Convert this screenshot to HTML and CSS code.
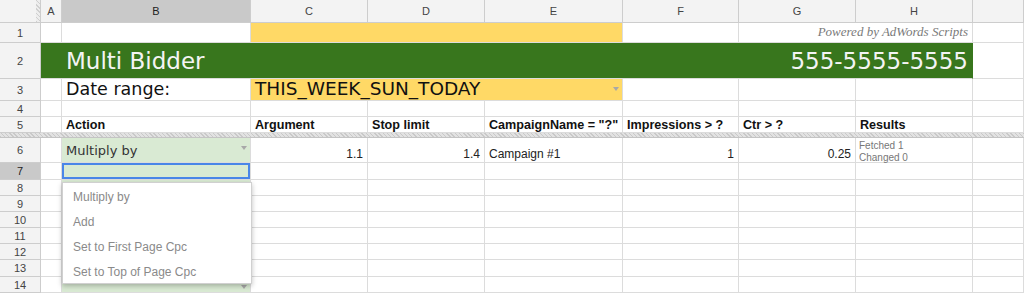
FILE: index.html
```html
<!DOCTYPE html>
<html lang="en">
<head>
    <meta charset="UTF-8">
    <title>Multi Bidder</title>
    <link rel="stylesheet" href="styles.css">
</head>
<body>
    <div class="sheet">
        <!-- column headers -->
        <div class="c ch corner"></div>
        <div class="c ch">A</div>
        <div class="c ch sel">B</div>
        <div class="c ch">C</div>
        <div class="c ch">D</div>
        <div class="c ch">E</div>
        <div class="c ch">F</div>
        <div class="c ch">G</div>
        <div class="c ch">H</div>
        <div class="c ch"></div>

        <!-- row 1 -->
        <div class="c rh">1</div>
        <div class="c"></div>
        <div class="c"></div>
        <div class="c yellow span3"></div>
        <div class="c"></div>
        <div class="c powered span2">Powered by AdWords Scripts</div>
        <div class="c"></div>

        <!-- row 2 -->
        <div class="c rh">2</div>
        <div class="c green span8">
            <span class="title">Multi Bidder</span>
            <span class="phone">555-5555-5555</span>
        </div>
        <div class="c"></div>

        <!-- row 3 -->
        <div class="c rh">3</div>
        <div class="c"></div>
        <div class="c big">Date range:</div>
        <div class="c yellow big range span3">THIS_WEEK_SUN_TODAY<i class="arrow"></i></div>
        <div class="c"></div>
        <div class="c"></div>
        <div class="c"></div>
        <div class="c"></div>

        <!-- row 4 -->
        <div class="c rh">4</div>
        <div class="c"></div><div class="c"></div><div class="c"></div><div class="c"></div>
        <div class="c"></div><div class="c"></div><div class="c"></div><div class="c"></div><div class="c"></div>

        <!-- row 5 -->
        <div class="c rh">5</div>
        <div class="c"></div>
        <div class="c head">Action</div>
        <div class="c head">Argument</div>
        <div class="c head">Stop limit</div>
        <div class="c head">CampaignName = "?"</div>
        <div class="c head">Impressions &gt; ?</div>
        <div class="c head">Ctr &gt; ?</div>
        <div class="c head">Results</div>
        <div class="c"></div>

        <div class="frozen"></div>

        <!-- row 6 -->
        <div class="c rh">6</div>
        <div class="c"></div>
        <div class="c lg action">Multiply by<i class="arrow"></i></div>
        <div class="c num">1.1</div>
        <div class="c num">1.4</div>
        <div class="c">Campaign #1</div>
        <div class="c num">1</div>
        <div class="c num">0.25</div>
        <div class="c results"><span>Fetched 1</span><span>Changed 0</span></div>
        <div class="c"></div>

        <!-- row 7 -->
        <div class="c rh sel">7</div>
        <div class="c"></div>
        <div class="c lg active"></div>
        <div class="c"></div><div class="c"></div><div class="c"></div>
        <div class="c"></div><div class="c"></div><div class="c"></div><div class="c"></div>

        <!-- rows 8 - 14 -->
        <div class="c rh">8</div>
        <div class="c"></div><div class="c lg"><i class="arrow"></i></div>
        <div class="c"></div><div class="c"></div><div class="c"></div>
        <div class="c"></div><div class="c"></div><div class="c"></div><div class="c"></div>

        <div class="c rh">9</div>
        <div class="c"></div><div class="c lg"><i class="arrow"></i></div>
        <div class="c"></div><div class="c"></div><div class="c"></div>
        <div class="c"></div><div class="c"></div><div class="c"></div><div class="c"></div>

        <div class="c rh">10</div>
        <div class="c"></div><div class="c lg"><i class="arrow"></i></div>
        <div class="c"></div><div class="c"></div><div class="c"></div>
        <div class="c"></div><div class="c"></div><div class="c"></div><div class="c"></div>

        <div class="c rh">11</div>
        <div class="c"></div><div class="c lg"><i class="arrow"></i></div>
        <div class="c"></div><div class="c"></div><div class="c"></div>
        <div class="c"></div><div class="c"></div><div class="c"></div><div class="c"></div>

        <div class="c rh">12</div>
        <div class="c"></div><div class="c lg"><i class="arrow"></i></div>
        <div class="c"></div><div class="c"></div><div class="c"></div>
        <div class="c"></div><div class="c"></div><div class="c"></div><div class="c"></div>

        <div class="c rh">13</div>
        <div class="c"></div><div class="c lg"><i class="arrow"></i></div>
        <div class="c"></div><div class="c"></div><div class="c"></div>
        <div class="c"></div><div class="c"></div><div class="c"></div><div class="c"></div>

        <div class="c rh">14</div>
        <div class="c"></div><div class="c lg"><i class="arrow"></i></div>
        <div class="c"></div><div class="c"></div><div class="c"></div>
        <div class="c"></div><div class="c"></div><div class="c"></div><div class="c"></div>

        <!-- validation dropdown for B7 -->
        <ul class="menu">
            <li>Multiply by</li>
            <li>Add</li>
            <li>Set to First Page Cpc</li>
            <li>Set to Top of Page Cpc</li>
        </ul>
    </div>
</body>
</html>
```

FILE: styles.css
```css
* { box-sizing: border-box; }
body { margin: 0; background: #fff; font-family: "Liberation Sans", Arial, sans-serif; overflow: hidden; }

.sheet {
    position: relative;
    display: grid;
    grid-template-columns: 41px 21px 189px 117px 117px 138px 116px 117px 117px 1fr;
    grid-template-rows: 23px 20px 36px 22px 16px 16px 5px 25px 17px 16px 16px 16px 16px 16px 17px 16px;
    height: 295px;
    overflow: hidden;
}

.c {
    display: flex;
    align-items: flex-end;
    padding: 0 4px 1px;
    border-right: 1px solid #dcdcdc;
    border-bottom: 1px solid #dcdcdc;
    font-size: 12px;
    line-height: 14px;
    color: #222;
    white-space: nowrap;
    overflow: hidden;
}

.ch, .rh {
    align-items: center;
    justify-content: center;
    padding: 0;
    background: #f3f3f3;
    border-color: #cdcdcd;
    font-size: 11px;
    color: #444;
}
.ch.sel, .rh.sel { background: #c9c9c9; color: #222; }
.corner {
    background:
        repeating-linear-gradient(45deg, #cfcfcf 0 1px, #ededed 1px 3px) right / 4px 100% no-repeat,
        #f3f3f3;
}

.span2 { grid-column: span 2; }
.span3 { grid-column: span 3; }
.span8 { grid-column: span 8; }

.yellow { background: #ffd966; }
.lg { background: #d9ead3; }

.powered {
    justify-content: flex-end;
    padding-bottom: 3px;
    font-family: "Liberation Serif", "Times New Roman", serif;
    font-style: italic;
    font-size: 13px;
    color: #7a7a7a;
}

.green {
    align-items: center;
    justify-content: space-between;
    padding: 0 4px 0 25px;
    background: #38761d;
    border-right-color: #38761d;
    font-family: "DejaVu Sans", Verdana, sans-serif;
    font-size: 23px;
    line-height: 28px;
    color: #f4f4f4;
}

.big {
    font-family: "DejaVu Sans", Verdana, sans-serif;
    font-size: 17.5px;
    line-height: 20px;
    color: #111;
}
.range { font-size: 18.5px; }

.head { padding-bottom: 0; font-weight: bold; font-size: 12.6px; line-height: 14px; color: #111; }
.num { justify-content: flex-end; }

.action {
    padding-bottom: 3px;
    font-family: "DejaVu Sans", Verdana, sans-serif;
    font-size: 13px;
    line-height: 16px;
    color: #333;
}
.active { box-shadow: inset 0 0 0 2px #4a86e8; }

.results {
    flex-direction: column;
    align-items: flex-start;
    justify-content: flex-start;
    padding: 1.5px 3px 0;
    font-size: 10px;
    line-height: 12px;
    color: #777;
    overflow: visible;
}

.arrow {
    align-self: flex-start;
    margin: 8px -1px 0 auto;
    border-left: 3.5px solid transparent;
    border-right: 3.5px solid transparent;
    border-top: 4px solid #a8a8a8;
}

.frozen {
    grid-column: 1 / -1;
    background: repeating-linear-gradient(45deg, #c9c9c9 0 1px, #e2e2e2 1px 3px);
    border-bottom: 1px solid #c4c4c4;
}

.menu {
    position: absolute;
    left: 62px;
    top: 182px;
    width: 190px;
    height: 102px;
    margin: 0;
    padding: 2px 0 0;
    list-style: none;
    background: #fff;
    border: 1px solid #d0d0d0;
    box-shadow: 0 2px 5px rgba(0, 0, 0, 0.25);
}
.menu li {
    height: 25px;
    padding-left: 10px;
    font-size: 12px;
    line-height: 25px;
    color: #8a8a8a;
}
```
